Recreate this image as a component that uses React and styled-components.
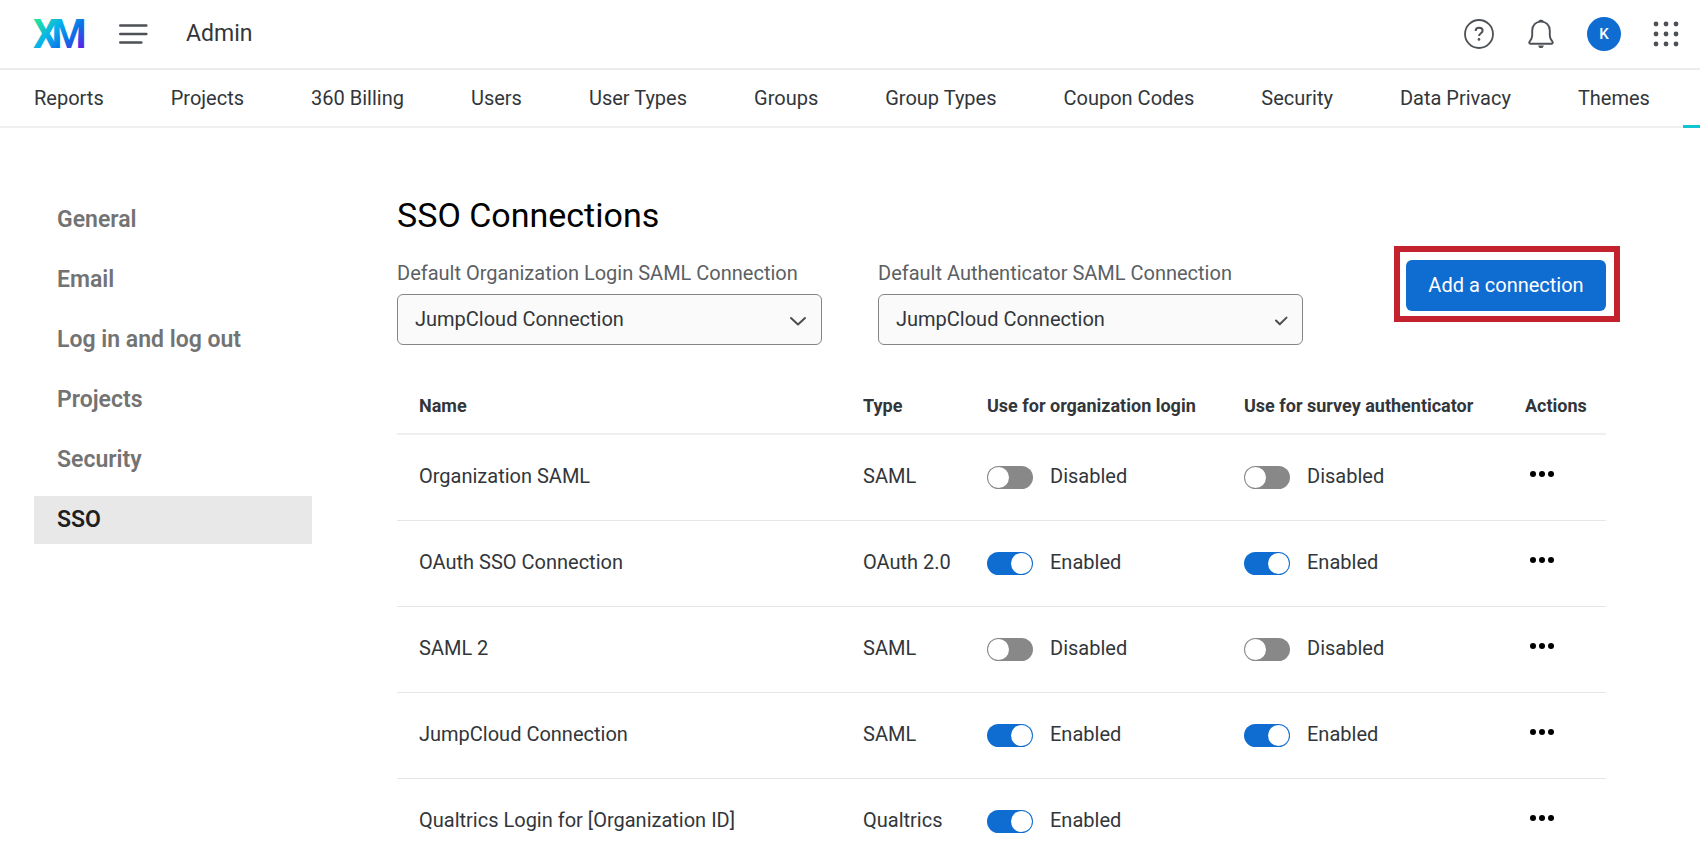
import React, { useState } from "react";
import styled, { createGlobalStyle } from "styled-components";

const GlobalStyle = createGlobalStyle`
  *, *::before, *::after { box-sizing: border-box; }
  body {
    margin: 0;
    background: #fff;
    color: #32363a;
    font-family: Roboto, "Liberation Sans", sans-serif;
    font-size: 20px;
    line-height: 24px;
    overflow-x: hidden;
  }
  button, select { font: inherit; color: inherit; }
`;

const TopBar = styled.header`
  display: flex;
  align-items: center;
  justify-content: space-between;
  height: 70px;
  padding: 0 18px 0 31px;
  border-bottom: 2px solid #ededed;
`;

const Brand = styled.div`
  display: flex;
  align-items: center;
`;

const LogoLink = styled.a`
  display: flex;
  margin-right: 31px;
`;

const IconButton = styled.button`
  display: flex;
  align-items: center;
  justify-content: center;
  padding: 0;
  border: 0;
  background: none;
  cursor: pointer;
`;

const PageName = styled.span`
  margin-left: 38px;
  font-size: 23px;
  line-height: 28px;
`;

const Tools = styled.div`
  display: flex;
  align-items: center;
  gap: 29px;
`;

const Avatar = styled.button`
  width: 34px;
  height: 34px;
  padding: 0;
  border: 0;
  border-radius: 50%;
  background: #0f6cd1;
  color: #fff;
  font-size: 15px;
  font-weight: 500;
`;

const Tabs = styled.nav`
  display: flex;
  height: 58px;
  border-bottom: 2px solid #f0f0f0;
`;

const Tab = styled.a`
  flex: ${(p) => (p.$active ? "1 0 0" : "none")};
  height: 58px;
  padding: ${(p) => (p.$active ? "0" : "16px 33px 0 34px")};
  border-bottom: ${(p) => (p.$active ? "3px solid #10c5cf" : "0")};
  color: inherit;
  text-decoration: none;
  white-space: nowrap;
`;

const Page = styled.main`
  display: flex;
  gap: 85px;
  padding: 68px 94px 0 34px;
`;

const SideNav = styled.nav`
  display: flex;
  flex-direction: column;
  gap: 12px;
  flex: none;
  width: 278px;
`;

const SideLink = styled.a`
  padding: 12px 23px;
  background: ${(p) => (p.$active ? "#e8e8e8" : "transparent")};
  color: ${(p) => (p.$active ? "#1f1f1f" : "#737373")};
  font-size: 23px;
  font-weight: 600;
  text-decoration: none;
`;

const Content = styled.section`
  flex: 1;
  min-width: 0;
`;

const Title = styled.h1`
  margin: 0;
  color: #000;
  font-size: 34px;
  font-weight: 400;
  line-height: 38px;
`;

const Controls = styled.div`
  display: flex;
  align-items: flex-start;
  gap: 56px;
  margin-top: 12px;
`;

const Field = styled.div`
  display: flex;
  flex-direction: column;
  gap: 9px;
  flex: 0 1 425px;
  padding-top: 15px;
`;

const FieldLabel = styled.label`
  color: #5b5f64;
  white-space: nowrap;
`;

const SelectBox = styled.div`
  position: relative;
`;

const Select = styled.select`
  width: 100%;
  height: 51px;
  padding: 0 48px 2px 17px;
  border: 1px solid #858585;
  border-radius: 6px;
  background: #fafafa;
  appearance: none;
`;

const SelectMark = styled.svg`
  position: absolute;
  top: 18px;
  right: 15px;
  pointer-events: none;
`;

const Highlight = styled.div`
  margin: 0 -14px 0 auto;
  padding: 8px 8px 5px 6px;
  border: 6px solid #c4222f;
`;

const PrimaryButton = styled.button`
  width: 200px;
  height: 51px;
  padding: 0 0 2px;
  border: 0;
  border-radius: 6px;
  background: #0f6cd1;
  color: #fff;
  white-space: nowrap;
`;

const Table = styled.table`
  width: 100%;
  margin-top: 33px;
  border-collapse: collapse;
  table-layout: fixed;
`;

const Col = styled.col`
  width: ${(p) => p.$width};
`;

const HeadCell = styled.th`
  height: 56px;
  padding: 0 0 0 ${(p) => (p.$first ? "22px" : "0")};
  border-bottom: 2px solid #efefef;
  font-size: 18px;
  font-weight: 700;
  text-align: left;
  white-space: nowrap;
`;

const Row = styled.tr`
  height: 86px;
  border-bottom: 1px solid #e6e6e6;
`;

const Cell = styled.td`
  padding: 0 0 2px ${(p) => (p.$first ? "22px" : "0")};
  white-space: nowrap;
`;

const SwitchLabel = styled.label`
  display: flex;
  align-items: center;
  gap: 17px;
`;

const SwitchInput = styled.input`
  appearance: none;
  flex: none;
  width: 46px;
  height: 23px;
  margin: 2px 0 0;
  padding: 1px;
  border-radius: 12px;
  background: #888;
  cursor: pointer;

  &::before {
    content: "";
    display: block;
    width: 21px;
    height: 21px;
    border-radius: 50%;
    background: #fff;
  }

  &:checked { background: #0f6cd1; }
  &:checked::before { margin-left: auto; }
`;

const MoreButton = styled(IconButton)`
  margin: 0 0 4px 5px;
  height: 24px;
`;

const TABS = [
  "Reports", "Projects", "360 Billing", "Users", "User Types", "Groups",
  "Group Types", "Coupon Codes", "Security", "Data Privacy", "Themes",
];

const SECTIONS = ["General", "Email", "Log in and log out", "Projects", "Security", "SSO"];

const CONNECTIONS = [
  { name: "Organization SAML", type: "SAML", login: false, survey: false },
  { name: "OAuth SSO Connection", type: "OAuth 2.0", login: true, survey: true },
  { name: "SAML 2", type: "SAML", login: false, survey: false },
  { name: "JumpCloud Connection", type: "SAML", login: true, survey: true },
  { name: "Qualtrics Login for [Organization ID]", type: "Qualtrics", login: true },
];

const Logo = () => (
  <svg width="56" height="52" viewBox="0 0 56 52" role="img" aria-label="XM">
    <defs>
      <linearGradient id="xm" gradientUnits="userSpaceOnUse" x1="10" y1="9" x2="48" y2="44">
        <stop offset="0" stopColor="#22e0a0" />
        <stop offset="0.36" stopColor="#06b0ee" />
        <stop offset="0.66" stopColor="#0a74e6" />
        <stop offset="1" stopColor="#5a1fe6" />
      </linearGradient>
    </defs>
    <text x="2" y="40" fill="url(#xm)" fontFamily="Roboto, sans-serif" fontWeight="700" fontSize="40">
      X<tspan dx="-7">M</tspan>
    </text>
  </svg>
);

const MenuIcon = () => (
  <svg width="30" height="24" viewBox="0 0 30 24" fill="none" stroke="#4d5156" strokeWidth="2.6" strokeLinecap="round">
    <path d="M2.3 3.5H28.3M2.3 12H28.3M2.3 20.5H23.3" />
  </svg>
);

const HelpIcon = () => (
  <svg width="32" height="32" viewBox="0 0 32 32" fill="none" stroke="#4d5156" strokeWidth="1.8">
    <circle cx="16" cy="16" r="14" />
    <path d="M12.6 13c0-2 1.4-3.3 3.5-3.3s3.5 1.2 3.5 3c0 2.6-3.5 2.6-3.5 5.4" strokeWidth="2" />
    <circle cx="16" cy="21.4" r="1.3" fill="#4d5156" stroke="none" />
  </svg>
);

const BellIcon = () => (
  <svg width="34" height="32" viewBox="0 0 34 32" fill="none" stroke="#4d5156" strokeWidth="1.9" strokeLinejoin="round">
    <path d="M17 3.6c-5.3 0-8.8 3.7-8.8 9v4.8c0 2.7-1 4.3-2.6 6.2-.7.9-.4 2.1.7 2.1h21.4c1.1 0 1.4-1.2.7-2.1-1.6-1.9-2.6-3.500-2.6-6.2v-4.8c0-5.300-3.500-9-8.800-9z" />
    <path d="M14 3.8c.5-1.6 1.6-2 3-2s2.5.4 3 2z" fill="#4d5156" stroke="none" />
    <path d="M14.2 27.4h5.6c-.2 1.6-1.2 2.6-2.8 2.6s-2.6-1-2.8-2.6z" fill="#4d5156" stroke="none" />
  </svg>
);

const AppsIcon = () => (
  <svg width="32" height="32" viewBox="0 0 32 32" fill="#4d5156">
    {[6, 16, 26].map((y) => [6, 16, 26].map((x) => <circle key={`${x}-${y}`} cx={x} cy={y} r="2.4" />))}
  </svg>
);

const DotsIcon = () => (
  <svg width="24" height="8" viewBox="0 0 24 8" fill="#000">
    <circle cx="3" cy="4" r="3" />
    <circle cx="12" cy="4" r="3" />
    <circle cx="21" cy="4" r="3" />
  </svg>
);

const MARKS = {
  chevron: "M2 6L9 12.5L16 6",
  check: "M6 8.5L9.8 12.2L16.5 5.6",
};

function ConnectionSelect({ id, label, mark }) {
  return (
    <Field>
      <FieldLabel htmlFor={id}>{label}</FieldLabel>
      <SelectBox>
        <Select id={id} defaultValue="JumpCloud Connection">
          <option>JumpCloud Connection</option>
        </Select>
        <SelectMark width="18" height="18" viewBox="0 0 18 18" fill="none" stroke="#4a4e53" strokeWidth="2" strokeLinecap="round" strokeLinejoin="round">
          <path d={MARKS[mark]} />
        </SelectMark>
      </SelectBox>
    </Field>
  );
}

function Switch({ initial }) {
  const [on, setOn] = useState(initial);
  return (
    <SwitchLabel>
      <SwitchInput type="checkbox" role="switch" checked={on} onChange={() => setOn(!on)} />
      {on ? "Enabled" : "Disabled"}
    </SwitchLabel>
  );
}

export default function App() {
  return (
    <>
      <GlobalStyle />
      <TopBar>
        <Brand>
          <LogoLink href="#home"><Logo /></LogoLink>
          <IconButton aria-label="Menu"><MenuIcon /></IconButton>
          <PageName>Admin</PageName>
        </Brand>
        <Tools>
          <IconButton aria-label="Help"><HelpIcon /></IconButton>
          <IconButton aria-label="Notifications"><BellIcon /></IconButton>
          <Avatar>K</Avatar>
          <IconButton aria-label="Apps"><AppsIcon /></IconButton>
        </Tools>
      </TopBar>
      <Tabs>
        {TABS.map((tab) => <Tab key={tab} href="#tab">{tab}</Tab>)}
        <Tab href="#tab" $active aria-label="Organization Settings" />
      </Tabs>
      <Page>
        <SideNav>
          {SECTIONS.map((s) => <SideLink key={s} href="#section" $active={s === "SSO"}>{s}</SideLink>)}
        </SideNav>
        <Content>
          <Title>SSO Connections</Title>
          <Controls>
            <ConnectionSelect id="login" label="Default Organization Login SAML Connection" mark="chevron" />
            <ConnectionSelect id="auth" label="Default Authenticator SAML Connection" mark="check" />
            <Highlight><PrimaryButton>Add a connection</PrimaryButton></Highlight>
          </Controls>
          <Table>
            <colgroup>
              <Col />
              <Col $width="124px" />
              <Col $width="257px" />
              <Col $width="281px" />
              <Col $width="81px" />
            </colgroup>
            <thead>
              <tr>
                <HeadCell $first>Name</HeadCell>
                <HeadCell>Type</HeadCell>
                <HeadCell>Use for organization login</HeadCell>
                <HeadCell>Use for survey authenticator</HeadCell>
                <HeadCell>Actions</HeadCell>
              </tr>
            </thead>
            <tbody>
              {CONNECTIONS.map((c) => (
                <Row key={c.name}>
                  <Cell $first>{c.name}</Cell>
                  <Cell>{c.type}</Cell>
                  <Cell><Switch initial={c.login} /></Cell>
                  <Cell>{c.survey !== undefined && <Switch initial={c.survey} />}</Cell>
                  <Cell><MoreButton aria-label={`Actions for ${c.name}`}><DotsIcon /></MoreButton></Cell>
                </Row>
              ))}
            </tbody>
          </Table>
        </Content>
      </Page>
    </>
  );
}
